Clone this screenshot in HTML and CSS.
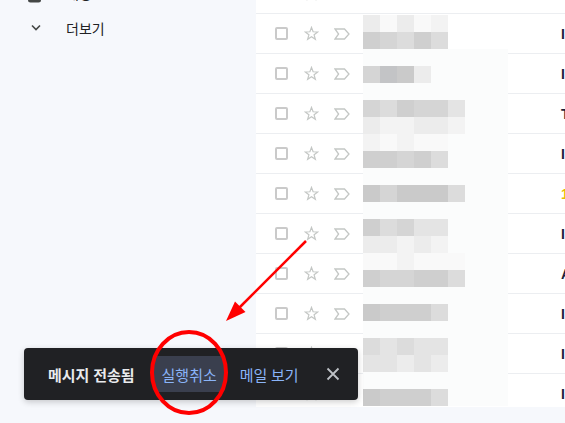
FILE: index.html
```html
<!DOCTYPE html>
<html lang="ko">
<head>
    <meta charset="UTF-8">
    <title>받은편지함</title>
    <link rel="stylesheet" href="styles.css">
</head>
<body>
    <div class="app">
        <nav class="sidebar">
            <div class="nav-item partial">
                <span class="nav-icon">
                    <svg width="20" height="20" viewBox="0 0 20 20"><rect x="2" y="5" width="13" height="14.5" rx="2.5" fill="#444746"/></svg>
                </span>
                <span class="nav-label">채팅</span>
            </div>
            <div class="nav-item">
                <span class="nav-icon">
                    <svg width="20" height="20" viewBox="0 0 20 20"><path d="M6 7.5l4 4 4-4" fill="none" stroke="#444746" stroke-width="1.6"/></svg>
                </span>
                <span class="nav-label">더보기</span>
            </div>
        </nav>

        <main class="main">
            <div class="mail-list">
                <div class="mail-row">
                    <span class="check"></span>
                    <svg class="star" viewBox="0 0 16 16"><polygon points="8,1.5 9.7,6.15 14.66,6.34 10.76,9.4 12.11,14.16 8,11.4 3.89,14.16 5.24,9.4 1.34,6.34 6.3,6.15"/></svg>
                    <svg class="important" viewBox="0 0 16 12"><path d="M1 1H10.5L15 6L10.5 11H1L4.6 6Z"/></svg>
                    <span class="subject">I</span>
                </div>
                <div class="mail-row">
                    <span class="check"></span>
                    <svg class="star" viewBox="0 0 16 16"><polygon points="8,1.5 9.7,6.15 14.66,6.34 10.76,9.4 12.11,14.16 8,11.4 3.89,14.16 5.24,9.4 1.34,6.34 6.3,6.15"/></svg>
                    <svg class="important" viewBox="0 0 16 12"><path d="M1 1H10.5L15 6L10.5 11H1L4.6 6Z"/></svg>
                    <span class="subject">I</span>
                </div>
                <div class="mail-row">
                    <span class="check"></span>
                    <svg class="star" viewBox="0 0 16 16"><polygon points="8,1.5 9.7,6.15 14.66,6.34 10.76,9.4 12.11,14.16 8,11.4 3.89,14.16 5.24,9.4 1.34,6.34 6.3,6.15"/></svg>
                    <svg class="important" viewBox="0 0 16 12"><path d="M1 1H10.5L15 6L10.5 11H1L4.6 6Z"/></svg>
                    <span class="subject">I</span>
                </div>
                <div class="mail-row">
                    <span class="check"></span>
                    <svg class="star" viewBox="0 0 16 16"><polygon points="8,1.5 9.7,6.15 14.66,6.34 10.76,9.4 12.11,14.16 8,11.4 3.89,14.16 5.24,9.4 1.34,6.34 6.3,6.15"/></svg>
                    <svg class="important" viewBox="0 0 16 12"><path d="M1 1H10.5L15 6L10.5 11H1L4.6 6Z"/></svg>
                    <span class="subject">T</span>
                </div>
                <div class="mail-row">
                    <span class="check"></span>
                    <svg class="star" viewBox="0 0 16 16"><polygon points="8,1.5 9.7,6.15 14.66,6.34 10.76,9.4 12.11,14.16 8,11.4 3.89,14.16 5.24,9.4 1.34,6.34 6.3,6.15"/></svg>
                    <svg class="important" viewBox="0 0 16 12"><path d="M1 1H10.5L15 6L10.5 11H1L4.6 6Z"/></svg>
                    <span class="subject">I</span>
                </div>
                <div class="mail-row">
                    <span class="check"></span>
                    <svg class="star" viewBox="0 0 16 16"><polygon points="8,1.5 9.7,6.15 14.66,6.34 10.76,9.4 12.11,14.16 8,11.4 3.89,14.16 5.24,9.4 1.34,6.34 6.3,6.15"/></svg>
                    <svg class="important" viewBox="0 0 16 12"><path d="M1 1H10.5L15 6L10.5 11H1L4.6 6Z"/></svg>
                    <span class="subject yellow">1</span>
                </div>
                <div class="mail-row">
                    <span class="check"></span>
                    <svg class="star" viewBox="0 0 16 16"><polygon points="8,1.5 9.7,6.15 14.66,6.34 10.76,9.4 12.11,14.16 8,11.4 3.89,14.16 5.24,9.4 1.34,6.34 6.3,6.15"/></svg>
                    <svg class="important" viewBox="0 0 16 12"><path d="M1 1H10.5L15 6L10.5 11H1L4.6 6Z"/></svg>
                    <span class="subject">I</span>
                </div>
                <div class="mail-row">
                    <span class="check"></span>
                    <svg class="star" viewBox="0 0 16 16"><polygon points="8,1.5 9.7,6.15 14.66,6.34 10.76,9.4 12.11,14.16 8,11.4 3.89,14.16 5.24,9.4 1.34,6.34 6.3,6.15"/></svg>
                    <svg class="important" viewBox="0 0 16 12"><path d="M1 1H10.5L15 6L10.5 11H1L4.6 6Z"/></svg>
                    <span class="subject">A</span>
                </div>
                <div class="mail-row">
                    <span class="check"></span>
                    <svg class="star" viewBox="0 0 16 16"><polygon points="8,1.5 9.7,6.15 14.66,6.34 10.76,9.4 12.11,14.16 8,11.4 3.89,14.16 5.24,9.4 1.34,6.34 6.3,6.15"/></svg>
                    <svg class="important" viewBox="0 0 16 12"><path d="M1 1H10.5L15 6L10.5 11H1L4.6 6Z"/></svg>
                    <span class="subject">I</span>
                </div>
                <div class="mail-row">
                    <span class="check"></span>
                    <svg class="star" viewBox="0 0 16 16"><polygon points="8,1.5 9.7,6.15 14.66,6.34 10.76,9.4 12.11,14.16 8,11.4 3.89,14.16 5.24,9.4 1.34,6.34 6.3,6.15"/></svg>
                    <svg class="important" viewBox="0 0 16 12"><path d="M1 1H10.5L15 6L10.5 11H1L4.6 6Z"/></svg>
                    <span class="subject">I</span>
                </div>
                <div class="mail-row">
                    <span class="check"></span>
                    <svg class="star" viewBox="0 0 16 16"><polygon points="8,1.5 9.7,6.15 14.66,6.34 10.76,9.4 12.11,14.16 8,11.4 3.89,14.16 5.24,9.4 1.34,6.34 6.3,6.15"/></svg>
                    <svg class="important" viewBox="0 0 16 12"><path d="M1 1H10.5L15 6L10.5 11H1L4.6 6Z"/></svg>
                    <span class="subject">I</span>
                </div>
            </div>
        </main>
    </div>

    <!-- pixelated sender names -->
    <div class="mosaic">
        <div class="m-row clear"><span class="m7"></span><span class="m9"></span><span class="m7"></span><span class="m9"></span><span class="m8"></span></div>
        <div class="m-row clear"><span class="m3"></span><span class="m4"></span><span class="m5"></span><span class="m3"></span><span class="m5"></span></div>
        <div class="m-row"></div>
        <div class="m-row"><span class="m4"></span><span class="m1"></span><span class="m2"></span><span class="m7"></span></div>
        <div class="m-row"></div>
        <div class="m-row"><span class="m4"></span><span class="m5"></span><span class="m3"></span><span class="m4"></span><span class="m4"></span><span class="m6"></span></div>
        <div class="m-row"><span class="m7"></span><span class="m8"></span><span class="m8"></span><span class="m7"></span><span class="m7"></span><span class="m8"></span></div>
        <div class="m-row"><span class="m8"></span><span class="m9"></span><span class="m8"></span><span class="m9"></span><span class="m9"></span></div>
        <div class="m-row"><span class="m3"></span><span class="m3"></span><span class="m4"></span><span class="m3"></span><span class="m5"></span></div>
        <div class="m-row"></div>
        <div class="m-row"><span class="m2"></span><span class="m4"></span><span class="m2"></span><span class="m2"></span><span class="m2"></span><span class="m5"></span></div>
        <div class="m-row"></div>
        <div class="m-row"><span class="m3"></span><span class="m5"></span><span class="m4"></span><span class="m6"></span><span class="m6"></span></div>
        <div class="m-row"><span class="m7"></span><span class="m7"></span><span class="m8"></span><span class="m7"></span><span class="m8"></span></div>
        <div class="m-row"><span class="m9"></span><span class="m9"></span><span class="m8"></span><span class="m9"></span><span class="m9"></span><span class="m9"></span></div>
        <div class="m-row"><span class="m3"></span><span class="m4"></span><span class="m4"></span><span class="m3"></span><span class="m3"></span><span class="m5"></span></div>
        <div class="m-row"></div>
        <div class="m-row"><span class="m2"></span><span class="m3"></span><span class="m3"></span><span class="m3"></span><span class="m5"></span></div>
        <div class="m-row"></div>
        <div class="m-row"><span class="m5"></span><span class="m6"></span><span class="m5"></span><span class="m6"></span><span class="m6"></span></div>
        <div class="m-row"><span class="m6"></span><span class="m6"></span><span class="m7"></span><span class="m6"></span><span class="m7"></span></div>
        <div class="m-row"></div>
        <div class="m-row"><span class="m2"></span><span class="m3"></span><span class="m3"></span><span class="m3"></span><span class="m5"></span></div>
    </div>

    <div class="toast">
        <span class="toast-msg">메시지 전송됨</span>
        <button class="toast-btn focused">실행취소</button>
        <button class="toast-btn">메일 보기</button>
        <button class="toast-close">
            <svg width="14" height="14" viewBox="0 0 14 14"><path d="M1.5 1.5l11 11M12.5 1.5l-11 11" stroke="#bdc1c6" stroke-width="1.8"/></svg>
        </button>
    </div>

    <svg class="annotation" width="565" height="423" viewBox="0 0 565 423">
        <ellipse cx="189" cy="372.5" rx="37" ry="40.5" fill="none" stroke="#f00" stroke-width="4"/>
        <line x1="306" y1="241" x2="239" y2="308" stroke="#f00" stroke-width="2.5"/>
        <polygon points="226,321 245.5,312 235,301.5" fill="#f00"/>
    </svg>
</body>
</html>
```

FILE: styles.css
```css
body {
    margin: 0;
    width: 565px;
    height: 423px;
    overflow: hidden;
    position: relative;
    background-color: #f6f8fc;
    font-family: Roboto, "Noto Sans CJK KR", sans-serif;
    color: #202124;
}

.app {
    display: flex;
    height: 100%;
}

.sidebar {
    width: 256px;
    flex-shrink: 0;
}

.nav-item {
    display: flex;
    align-items: center;
    height: 32px;
    padding-left: 26px;
    font-size: 14px;
    color: #202124;
}

.nav-item.partial {
    margin-top: -23px;
    margin-bottom: 3px;
}

.nav-icon {
    width: 20px;
    height: 20px;
    margin-right: 20px;
    display: flex;
}

.main {
    flex: 1;
    min-width: 0;
    overflow: hidden;
}

.mail-list {
    margin-top: -26px;
    height: 433px;
    background: #fff;
    overflow: hidden;
}

.mail-row {
    display: flex;
    align-items: center;
    height: 39px;
    border-bottom: 1px solid #eceef1;
}

.check {
    flex-shrink: 0;
    width: 13px;
    height: 13px;
    margin-left: 19px;
    box-sizing: border-box;
    border: 2px solid #cacaca;
    border-radius: 2px;
}

.star,
.important {
    flex-shrink: 0;
    fill: none;
    stroke: #c4c7c5;
    stroke-width: 1.3;
}

.star {
    width: 15px;
    height: 15px;
    margin-left: 16px;
}

.important {
    width: 16px;
    height: 12px;
    margin-left: 15px;
}

.subject {
    margin-left: 211px;
    font: bold 14px "Liberation Sans", sans-serif;
    color: #1e1f3c;
    white-space: nowrap;
}

.subject.yellow {
    color: #e9bd00;
}

/* mosaic over sender names */
.mosaic {
    position: absolute;
    left: 363px;
    top: 15px;
    width: 145px;
    overflow: hidden;
}

.m-row {
    display: flex;
    height: 17px;
    background: #fbfcfc;
}

.m-row.clear {
    background: transparent;
}

.m-row span {
    width: 17px;
    flex-shrink: 0;
}

.m1 { background: #c3c4c6; }
.m2 { background: #cacaca; }
.m3 { background: #cfcfcf; }
.m4 { background: #d5d5d5; }
.m5 { background: #dcdcdc; }
.m6 { background: #e4e4e4; }
.m7 { background: #ececec; }
.m8 { background: #f3f3f3; }
.m9 { background: #f9f9f9; }

.toast {
    position: absolute;
    left: 24px;
    top: 348px;
    width: 334px;
    height: 52px;
    box-sizing: border-box;
    padding-left: 24px;
    display: flex;
    align-items: center;
    background: #202124;
    border-radius: 4px;
    box-shadow: 0 2px 6px rgba(0, 0, 0, 0.2);
    font-size: 15px;
}

.toast-msg {
    color: #e8eaed;
    font-weight: bold;
    margin-right: 19px;
    white-space: nowrap;
}

.toast-btn {
    height: 36px;
    padding: 0 8px;
    border: none;
    border-radius: 4px;
    background: none;
    color: #8ab4f8;
    font: inherit;
    white-space: nowrap;
}

.toast-btn.focused {
    background: #3a3f4e;
}

.toast-btn + .toast-btn {
    margin-left: 7px;
}

.toast-close {
    margin-left: auto;
    margin-right: 11px;
    width: 28px;
    height: 28px;
    padding: 0;
    border: none;
    background: none;
    display: flex;
    align-items: center;
    justify-content: center;
}

.annotation {
    position: absolute;
    left: 0;
    top: 0;
    pointer-events: none;
}
```
